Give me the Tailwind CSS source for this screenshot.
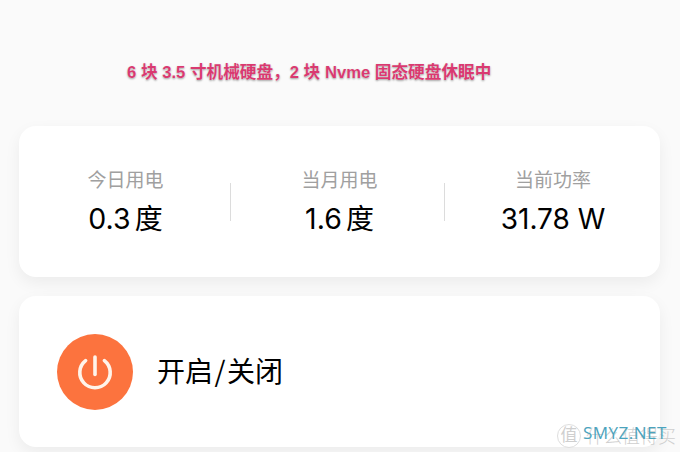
<!doctype html>
<html lang="zh-CN">
<head>
  <meta charset="UTF-8">
  <meta name="viewport" content="width=device-width, initial-scale=1.0">
  <title>用电统计</title>
  <script src="https://cdn.jsdelivr.net/npm/@tailwindcss/browser@4"></script>
</head>

<body class="relative flex flex-col w-[680px] h-[452px] overflow-hidden bg-[#fafafa] px-[19px] font-[Inter,'Noto_Sans_CJK_SC',sans-serif] text-black">

  <!-- Note -->
  <header class="h-[126px] pt-[61px] pl-[108px]">
    <p class="text-[16.65px] leading-6 font-bold whitespace-nowrap text-[#d93a70] font-['Liberation_Sans','Noto_Sans_CJK_SC',sans-serif] [text-shadow:0_0_1px_#fff,0_1px_2px_rgba(0,0,0,0.4)]">6 块 3.5 寸机械硬盘，2 块 Nvme 固态硬盘休眠中</p>
  </header>

  <!-- Power usage -->
  <section class="flex w-[641px] h-[151px] shrink-0 rounded-[17px] bg-white pt-[41px] shadow-[0_6px_16px_rgba(0,0,0,0.06)]">
    <div class="w-[211px] pl-[2px] text-center">
      <p class="text-[19px] leading-7 text-[#a0a0a0]">今日用电</p>
      <p class="mt-1 text-[28.5px] leading-10">0.3<span class="ml-1 text-[28px]">度</span></p>
    </div>
    <div class="mt-[16px] h-[38px] w-px bg-[#dcdcdc]"></div>
    <div class="w-[213px] pl-[4px] text-center">
      <p class="text-[19px] leading-7 text-[#a0a0a0]">当月用电</p>
      <p class="mt-1 text-[28.5px] leading-10">1.6<span class="ml-1 text-[28px]">度</span></p>
    </div>
    <div class="mt-[16px] h-[38px] w-px bg-[#dcdcdc]"></div>
    <div class="flex-1 pl-px text-center">
      <p class="text-[19px] leading-7 text-[#a0a0a0]">当前功率</p>
      <p class="mt-1 text-[28px] leading-10">31.78 W</p>
    </div>
  </section>

  <!-- Switch -->
  <section class="mt-[19px] flex w-[641px] h-[151px] shrink-0 items-center gap-[24px] rounded-[17px] bg-white pl-[38px] shadow-[0_6px_16px_rgba(0,0,0,0.06)]">
    <button class="size-[76px] rounded-full bg-[#fc733e]">
      <svg class="size-[76px]" viewBox="0 0 76 76" fill="none" stroke="#fff4ea" stroke-width="3.6" stroke-linecap="round">
        <path d="M38 23v17.5" />
        <path d="M28.6 26.6a15.2 15.2 0 1 0 18.8 0" />
      </svg>
    </button>
    <p class="-mt-[3px] text-[28px] leading-10 font-['Noto_Sans_CJK_SC',sans-serif]">开启<span class="mx-[1.5px]">/</span>关闭</p>
  </section>

  <!-- Watermark -->
  <div class="absolute left-[557px] top-[422px] flex items-center whitespace-nowrap text-[#cfcfcf]">
    <span class="flex size-[24px] items-center justify-center rounded-full border border-[#dedede] text-[17px] leading-none">值</span>
    <span class="ml-[5px] mt-[3px] text-[18px] leading-6 font-light">什么值得买</span>
  </div>
  <div class="absolute left-[583px] top-[421px] text-[17px] leading-6 tracking-[0.5px] text-[#4ba3bd] font-['Open_Sans',sans-serif]">SMYZ.NET</div>

</body>
</html>
